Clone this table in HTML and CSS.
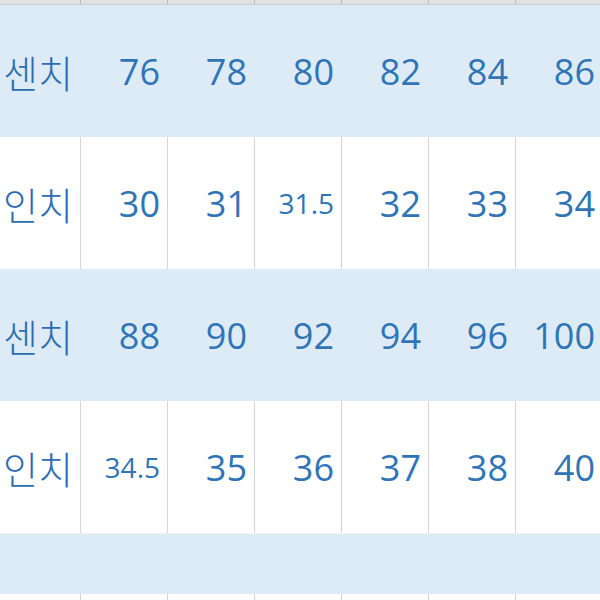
FILE: index.html
```html
<!DOCTYPE html>
<html lang="ko">
<head>
<meta charset="utf-8">
<link rel="stylesheet" href="styles.css">
</head>
<body>
<div class="sheet">
  <div class="row top">
    <div class="cell"></div><div class="cell"></div><div class="cell"></div><div class="cell"></div><div class="cell"></div><div class="cell"></div><div class="cell"></div>
  </div>
  <div class="row blue">
    <div class="cell label">센치</div><div class="cell">76</div><div class="cell">78</div><div class="cell">80</div><div class="cell">82</div><div class="cell">84</div><div class="cell">86</div>
  </div>
  <div class="row white">
    <div class="cell label">인치</div><div class="cell">30</div><div class="cell">31</div><div class="cell small">31.5</div><div class="cell">32</div><div class="cell">33</div><div class="cell">34</div>
  </div>
  <div class="row blue">
    <div class="cell label">센치</div><div class="cell">88</div><div class="cell">90</div><div class="cell">92</div><div class="cell">94</div><div class="cell">96</div><div class="cell">100</div>
  </div>
  <div class="row white">
    <div class="cell label">인치</div><div class="cell small">34.5</div><div class="cell">35</div><div class="cell">36</div><div class="cell">37</div><div class="cell">38</div><div class="cell">40</div>
  </div>
  <div class="row blue short">
    <div class="cell"></div><div class="cell"></div><div class="cell"></div><div class="cell"></div><div class="cell"></div><div class="cell"></div><div class="cell"></div>
  </div>
  <div class="row white">
    <div class="cell"></div><div class="cell"></div><div class="cell"></div><div class="cell"></div><div class="cell"></div><div class="cell"></div><div class="cell"></div>
  </div>
</div>
</body>
</html>
```
FILE: styles.css
```css
html, body {
  margin: 0;
  padding: 0;
  width: 600px;
  height: 600px;
  overflow: hidden;
  background: #ffffff;
}
.sheet {
  width: 700px;
  display: flex;
  flex-direction: column;
}
.row {
  display: grid;
  grid-template-columns: 81px repeat(6, 87px);
  height: 132px;
}
.cell {
  box-sizing: border-box;
  display: flex;
  align-items: center;
  justify-content: flex-end;
  padding-right: 7px;
  font-family: "Open Sans", "Noto Sans CJK KR", sans-serif;
  font-size: 36px;
  color: #2f75b6;
  border-right: 1px solid #d4d4d4;
}
.row.top {
  height: 5px;
  background: #e2e2e2;
  border-bottom: 1px solid #cfcfcf;
  box-sizing: border-box;
}
.row.top .cell {
  border-right-color: #bdbdbd;
}
.row.blue {
  background: #ddebf7;
}
.row.blue .cell {
  border-right-color: #ddebf7;
}
.row.short {
  height: 61px;
  border-top: 1px solid #eef2f6;
  box-sizing: border-box;
}
.row.white {
  background: #ffffff;
}
.label {
  font-family: "Noto Sans CJK KR", sans-serif;
  font-size: 38px;
  font-weight: 300;
  color: #2a6db0;
  white-space: nowrap;
}
.small {
  font-size: 28px;
}
```
